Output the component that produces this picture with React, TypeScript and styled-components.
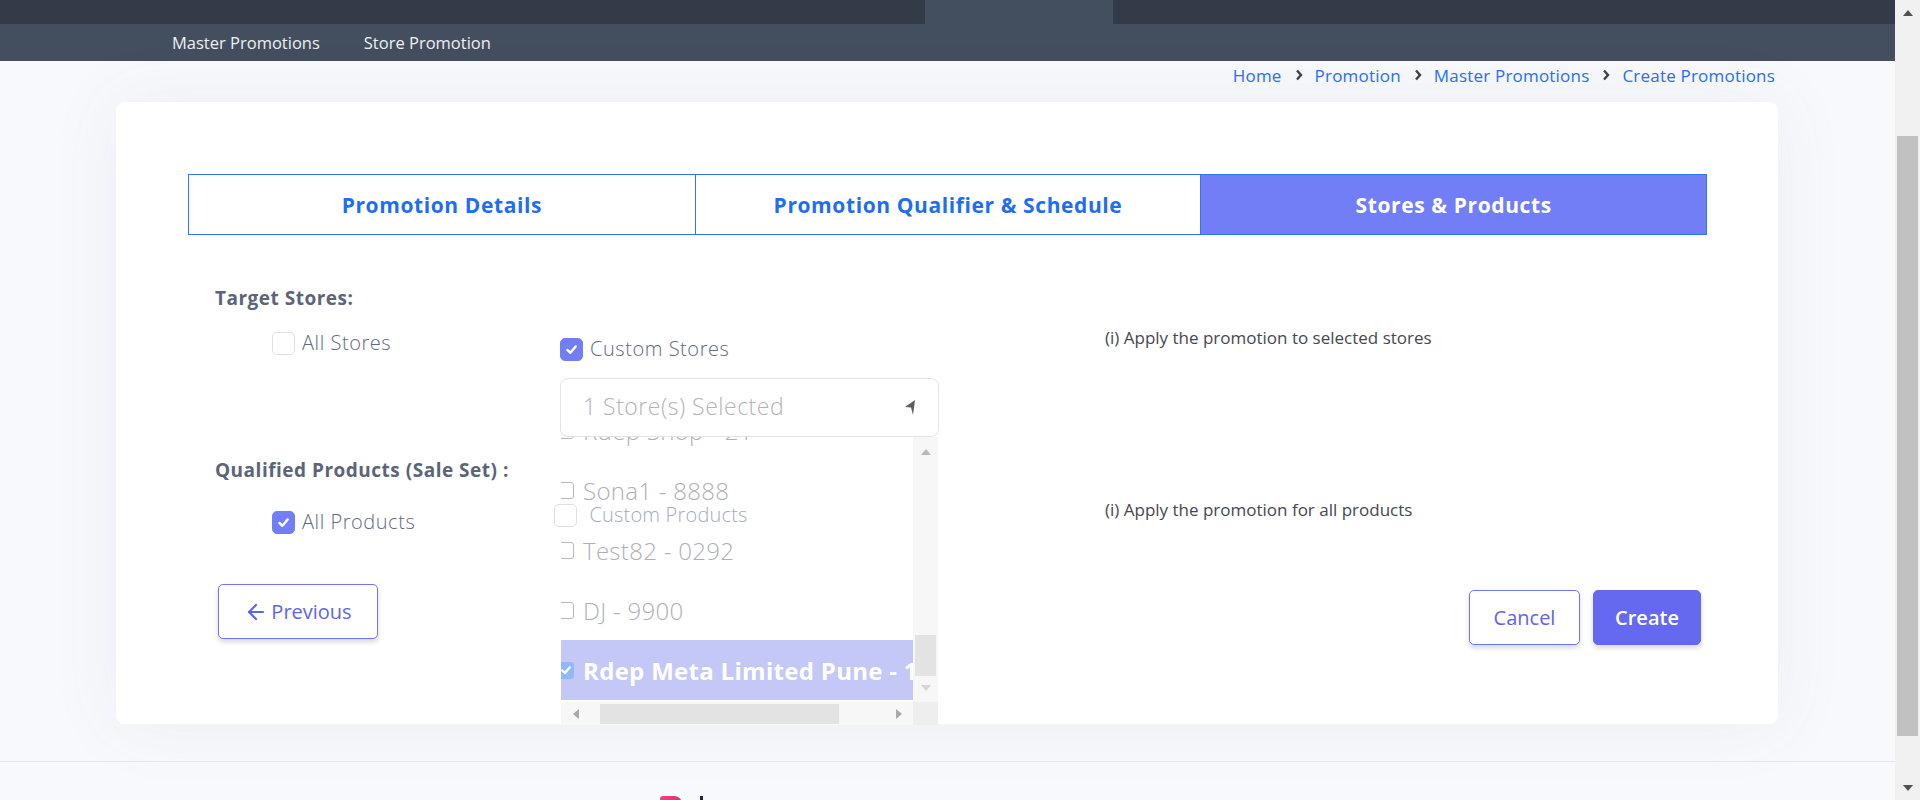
import React from "react";
import styled, { createGlobalStyle } from "styled-components";
import { ArrowLeft } from "lucide-react";

const GlobalStyle = createGlobalStyle`
    html, body {
        margin: 0;
        padding: 0;
        background: #f8f9fc;
        overflow: hidden;
    }
    body {
        font-family: "Open Sans", Lato, "Noto Sans", sans-serif;
    }
    * {
        box-sizing: border-box;
    }
`;

const Shell = styled.div`
    display: flex;
    width: 1920px;
    height: 800px;
    overflow: hidden;
`;

const Page = styled.div`
    flex: 1;
    min-width: 0;
    height: 800px;
    overflow: hidden;
`;

const TopBar = styled.div`
    height: 24px;
    background: #333a48;
    display: flex;
    padding-left: 925px;
`;

const TopBarActive = styled.div`
    width: 188px;
    background: #434f5e;
`;

const SubNav = styled.nav`
    height: 37px;
    background: #434f5e;
    display: flex;
    align-items: center;
    gap: 44px;
    padding-left: 172px;
    a {
        color: #eef0f3;
        font-size: 16.5px;
        text-decoration: none;
    }
`;

const Main = styled.main`
    padding: 0 117px 0 116px;
`;

const Breadcrumb = styled.div`
    height: 28px;
    display: flex;
    justify-content: flex-end;
    align-items: center;
    padding-right: 3px;
    font-size: 17px;
    letter-spacing: 0.2px;
    color: #2a6df4;
    svg {
        margin: 0 12px 0 13px;
    }
`;

const Card = styled.section`
    margin-top: 13px;
    background: #fff;
    border-radius: 9px;
    box-shadow: 0 0 70px rgba(90, 100, 140, 0.08);
    padding: 72px 71px 79px 72px;
`;

const Tabs = styled.div`
    display: grid;
    grid-template-columns: repeat(3, 1fr);
    border: 1px solid #2b78f0;
    height: 61px;
`;

const Tab = styled.div<{ $active?: boolean }>`
    display: flex;
    align-items: center;
    justify-content: center;
    font-size: 21px;
    letter-spacing: 0.6px;
    font-weight: 700;
    color: ${(p) => (p.$active ? "#fff" : "#1f6ef0")};
    background: ${(p) => (p.$active ? "#727ef5" : "#fff")};
    & + & {
        border-left: 1px solid #2b78f0;
    }
`;

const Form = styled.div`
    padding-left: 27px;
    padding-top: 51px;
`;

const SectionLabel = styled.div<{ $gap?: number }>`
    font-size: 19px;
    letter-spacing: 0.5px;
    line-height: 24px;
    height: 24px;
    font-weight: 700;
    color: #5b6479;
    margin-top: ${(p) => p.$gap || 0}px;
    margin-bottom: 10px;
`;

const OptionRow = styled.div`
    display: grid;
    grid-template-columns: 288px 545px 1fr;
    padding-left: 57px;
    align-items: start;
`;

const CheckLine = styled.label<{ $top: number; $shift?: number; $faded?: boolean }>`
    display: flex;
    align-items: center;
    gap: 7px;
    height: 24px;
    line-height: 24px;
    margin-top: ${(p) => p.$top}px;
    margin-left: ${(p) => p.$shift || 0}px;
    font-size: 20px;
    letter-spacing: ${(p) => (p.$faded ? 0.2 : 0.55)}px;
    font-weight: 300;
    color: ${(p) => (p.$faded ? "#a4acb9" : "#5f6a7c")};
    position: relative;
    z-index: 2;
`;

const Box = styled.span<{ $checked?: boolean }>`
    flex: none;
    width: 23px;
    height: 23px;
    border-radius: 5px;
    display: flex;
    align-items: center;
    justify-content: center;
    background: ${(p) => (p.$checked ? "#727ef5" : "#fff")};
    border: 1px solid ${(p) => (p.$checked ? "#727ef5" : "#dedfe3")};
`;

const Info = styled.div`
    margin-top: 6px;
    font-size: 17px;
    line-height: 24px;
    height: 24px;
    color: #46474f;
`;

const CustomColumn = styled.div`
    margin-top: 17px;
    position: relative;
`;

const Select = styled.div`
    margin-top: 17px;
    width: 379px;
    height: 59px;
    border: 1px solid #e3e3e5;
    border-radius: 8px;
    background: #fff;
    display: flex;
    align-items: center;
    justify-content: space-between;
    padding: 0 22px 4px 22px;
    font-size: 23px;
    letter-spacing: 0.5px;
    font-weight: 300;
    color: #b3b3b6;
    svg {
        margin-top: 4px;
    }
`;

const DropList = styled.div`
    position: absolute;
    top: 100%;
    left: 1px;
    width: 377px;
    height: 288px;
    background: #fff;
    display: grid;
    grid-template-columns: 1fr 25px;
    grid-template-rows: 1fr 23px;
    z-index: 1;
`;

const ListViewport = styled.div`
    overflow: hidden;
`;

const ListInner = styled.div`
    margin-top: -37px;
    margin-left: -4px;
    width: 460px;
`;

const Item = styled.div<{ $selected?: boolean }>`
    height: 60px;
    display: flex;
    align-items: center;
    gap: 9px;
    white-space: nowrap;
    font-size: 24px;
    letter-spacing: 0.3px;
    font-weight: ${(p) => (p.$selected ? 700 : 300)};
    color: ${(p) => (p.$selected ? "#fff" : "#aeb0b6")};
    background: ${(p) => (p.$selected ? "#c3c8f7" : "transparent")};
`;

const NativeBox = styled.span<{ $checked?: boolean }>`
    flex: none;
    width: 17px;
    height: 17px;
    border-radius: 3px;
    border: 1.5px solid ${(p) => (p.$checked ? "#8fb8ff" : "#b8b8bc")};
    background: ${(p) => (p.$checked ? "#8fb8ff" : "#fff")};
    display: flex;
    align-items: center;
    justify-content: center;
`;

const VScroll = styled.div`
    background: #f7f7f7;
    display: flex;
    flex-direction: column;
    align-items: center;
    padding: 9px 2px 8px;
    justify-content: space-between;
`;

const VThumb = styled.div`
    margin-top: auto;
    width: 21px;
    height: 41px;
    background: #e3e3e3;
    margin-bottom: 6px;
`;

const HScroll = styled.div`
    background: #f7f7f7;
    display: flex;
    align-items: center;
    padding: 0 8px 0 9px;
`;

const HThumb = styled.div`
    margin-left: 18px;
    width: 239px;
    height: 20px;
    background: #e3e3e3;
    margin-right: auto;
`;

const Corner = styled.div`
    background: #eeeeee;
`;

const ButtonRow = styled.div`
    margin-top: 50px;
    display: flex;
    justify-content: space-between;
    align-items: flex-start;
    padding: 0 6px 0 30px;
`;

const RightButtons = styled.div`
    margin-top: 6px;
    display: flex;
    gap: 13px;
`;

const Button = styled.button<{ $primary?: boolean; $w: number }>`
    width: ${(p) => p.$w}px;
    height: 55px;
    border-radius: 5px;
    border: 1px solid ${(p) => (p.$primary ? "#6469ef" : "#6f76f0")};
    background: ${(p) => (p.$primary ? "#6469ef" : "#fff")};
    color: ${(p) => (p.$primary ? "#fff" : "#5e65ea")};
    font-family: inherit;
    font-size: 20px;
    font-weight: ${(p) => (p.$primary ? 600 : 400)};
    display: flex;
    align-items: center;
    justify-content: center;
    gap: 3px;
    box-shadow: 0 3px 5px rgba(0, 0, 0, 0.16);
    padding: 0;
`;

const Footer = styled.footer`
    margin-top: 37px;
    border-top: 1px solid #e3e6ec;
    height: 80px;
    padding: 34px 0 0 660px;
    display: flex;
    gap: 18px;
`;

const LogoMark = styled.span`
    width: 22px;
    height: 30px;
    background: linear-gradient(90deg, #f0437c, #e0306e);
    border-radius: 3px 8px 0 0;
`;

const LogoBar = styled.span`
    width: 3px;
    height: 30px;
    background: #1d2540;
`;

const PageScroll = styled.div`
    width: 25px;
    background: #f1f1f1;
    display: flex;
    flex-direction: column;
    align-items: center;
`;

const ScrollArrow = styled.div`
    flex: none;
    height: 25px;
    display: flex;
    align-items: center;
    justify-content: center;
`;

const PageThumb = styled.div`
    flex: none;
    margin-top: 111px;
    width: 21px;
    height: 600px;
    background: #c1c1c1;
    margin-bottom: auto;
`;

function Chevron() {
	return (
		<svg width="8" height="12" viewBox="0 0 8 12">
			<path d="M2 1.5 L6 6 L2 10.5" stroke="#404040" strokeWidth="2.4" fill="none" />
		</svg>
	);
}

function Tick({ size = 13 }: { size?: number }) {
	return (
		<svg width={size} height={size} viewBox="0 0 14 14">
			<path d="M2.5 7.5 L5.8 10.5 L11.5 3.8" stroke="#fff" strokeWidth="2.6" fill="none" strokeLinecap="round" strokeLinejoin="round" />
		</svg>
	);
}

function Tri({ dir, color }: { dir: "up" | "down" | "left" | "right"; color: string }) {
	const pts = {
		up: "1,9 6,3 11,9",
		down: "1,3 6,9 11,3",
		left: "9,1 3,6 9,11",
		right: "3,1 9,6 3,11"
	}[dir];
	return (
		<svg width="12" height="12" viewBox="0 0 12 12">
			<polygon points={pts} fill={color} />
		</svg>
	);
}

const stores = [
	{ name: "Rdep Shop - 21" },
	{ name: "Sona1 - 8888" },
	{ name: "Test82 - 0292" },
	{ name: "DJ - 9900" },
	{ name: "Rdep Meta Limited Pune - 1705", selected: true }
];

export default function App() {
	return (
		<Shell>
			<GlobalStyle />
			<Page>
				<TopBar>
					<TopBarActive />
				</TopBar>
				<SubNav>
					<a href="#">Master Promotions</a>
					<a href="#">Store Promotion</a>
				</SubNav>
				<Main>
					<Breadcrumb>
						<span>Home</span>
						<Chevron />
						<span>Promotion</span>
						<Chevron />
						<span>Master Promotions</span>
						<Chevron />
						<span>Create Promotions</span>
					</Breadcrumb>
					<Card>
						<Tabs>
							<Tab>Promotion Details</Tab>
							<Tab>Promotion Qualifier &amp; Schedule</Tab>
							<Tab $active>Stores &amp; Products</Tab>
						</Tabs>
						<Form>
							<SectionLabel>Target Stores:</SectionLabel>
							<OptionRow>
								<CheckLine $top={11}>
									<Box />
									All Stores
								</CheckLine>
								<CustomColumn>
									<CheckLine $top={0}>
										<Box $checked>
											<Tick />
										</Box>
										Custom Stores
									</CheckLine>
									<Select>
										<span>1 Store(s) Selected</span>
										<svg width="11" height="15" viewBox="0 0 11 15">
											<polygon points="10,0 0,7 6,7.5 8,15" fill="#5d5d5d" />
										</svg>
									</Select>
									<DropList>
										<ListViewport>
											<ListInner>
												{stores.map((s) => (
													<Item key={s.name} $selected={s.selected}>
														<NativeBox $checked={s.selected}>
															{s.selected && <Tick size={12} />}
														</NativeBox>
														{s.name}
													</Item>
												))}
											</ListInner>
										</ListViewport>
										<VScroll>
											<Tri dir="up" color="#b8b8b8" />
											<VThumb />
											<Tri dir="down" color="#d6d6d6" />
										</VScroll>
										<HScroll>
											<Tri dir="left" color="#a8a8a8" />
											<HThumb />
											<Tri dir="right" color="#a8a8a8" />
										</HScroll>
										<Corner />
									</DropList>
								</CustomColumn>
								<Info>(i) Apply the promotion to selected stores</Info>
							</OptionRow>

							<SectionLabel $gap={21}>Qualified Products (Sale Set) :</SectionLabel>
							<OptionRow>
								<CheckLine $top={18}>
									<Box $checked>
										<Tick />
									</Box>
									All Products
								</CheckLine>
								<CheckLine $top={11} $shift={-6} $faded>
									<Box />
									&nbsp;Custom Products
								</CheckLine>
								<Info>(i) Apply the promotion for all products</Info>
							</OptionRow>
						</Form>
						<ButtonRow>
							<Button $w={160}>
								<ArrowLeft size={24} strokeWidth={2.2} />
								Previous
							</Button>
							<RightButtons>
								<Button $w={111}>Cancel</Button>
								<Button $primary $w={108}>Create</Button>
							</RightButtons>
						</ButtonRow>
					</Card>
				</Main>
				<Footer>
					<LogoMark />
					<LogoBar />
				</Footer>
			</Page>
			<PageScroll>
				<ScrollArrow>
					<Tri dir="up" color="#505050" />
				</ScrollArrow>
				<PageThumb />
				<ScrollArrow>
					<Tri dir="down" color="#505050" />
				</ScrollArrow>
			</PageScroll>
		</Shell>
	);
}
